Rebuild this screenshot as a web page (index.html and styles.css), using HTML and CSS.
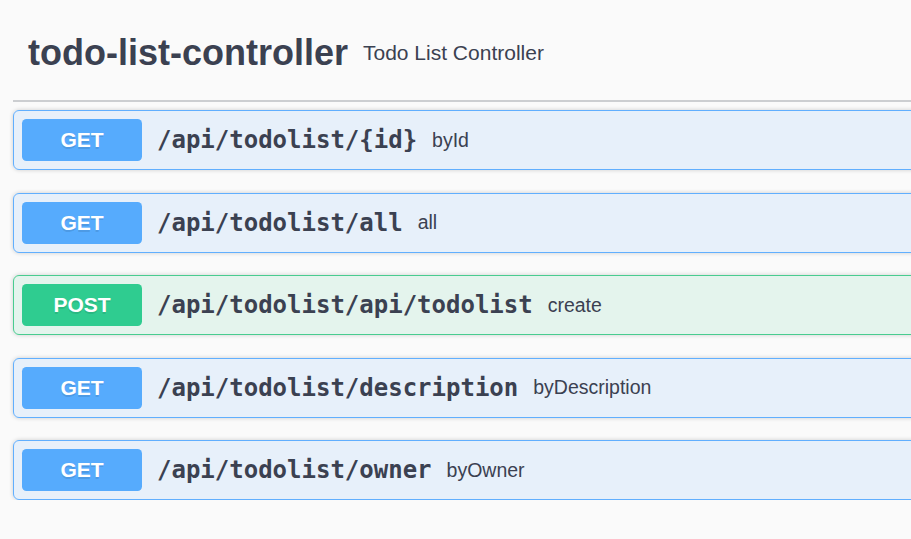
FILE: index.html
```html
<!DOCTYPE html>
<html lang="en">
<head>
<meta charset="utf-8">
<title>todo-list-controller</title>
<link rel="stylesheet" href="styles.css">
</head>
<body>
<div class="wrapper">
  <div class="tag">
    <h3 class="tag-title">todo-list-controller</h3>
    <small class="tag-desc">Todo List Controller</small>
  </div>
  <div class="ops">
    <div class="op op-get">
      <span class="method">GET</span>
      <span class="path">/api/todolist/{id}</span>
      <span class="summary">byId</span>
    </div>
    <div class="op op-get">
      <span class="method">GET</span>
      <span class="path">/api/todolist/all</span>
      <span class="summary">all</span>
    </div>
    <div class="op op-post">
      <span class="method">POST</span>
      <span class="path">/api/todolist/api/todolist</span>
      <span class="summary">create</span>
    </div>
    <div class="op op-get">
      <span class="method">GET</span>
      <span class="path">/api/todolist/description</span>
      <span class="summary">byDescription</span>
    </div>
    <div class="op op-get">
      <span class="method">GET</span>
      <span class="path">/api/todolist/owner</span>
      <span class="summary">byOwner</span>
    </div>
  </div>
</div>
</body>
</html>
```

FILE: styles.css
```css
html, body {
  margin: 0;
  padding: 0;
  background: #fafafa;
  overflow: hidden;
}

body {
  font-family: "Liberation Sans", Arial, sans-serif;
  color: #3b4151;
}

.wrapper {
  width: 1200px;
  padding-left: 13px;
}

.tag {
  display: flex;
  align-items: center;
  box-sizing: border-box;
  height: 102px;
  padding: 6px 30px 0 15px;
  border-bottom: 2px solid rgba(59, 65, 81, 0.24);
  margin-bottom: 8px;
}

.tag-title {
  margin: 0;
  font-size: 36px;
  font-weight: bold;
  line-height: normal;
  color: #3b4151;
}

.tag-desc {
  padding: 0 15px;
  font-size: 21px;
  color: #3b4151;
}

.ops {
  display: flex;
  flex-direction: column;
  gap: 22.5px;
}

.op {
  display: flex;
  align-items: center;
  padding: 8px;
  border: 1px solid #61affe;
  border-radius: 6px;
  background: rgba(97, 175, 254, 0.12);
  box-shadow: 0 0 4.5px rgba(0, 0, 0, 0.19);
}

.op-post {
  border-color: #49cc90;
  background: rgba(73, 204, 144, 0.12);
}

.method {
  display: block;
  min-width: 120px;
  box-sizing: border-box;
  padding: 9px 0;
  line-height: 24px;
  font-size: 21px;
  font-weight: bold;
  text-align: center;
  color: #fff;
  background: #56abfd;
  border-radius: 4.5px;
  text-shadow: 0 1.5px 0 rgba(0, 0, 0, 0.1);
}

.op-post .method {
  background: #2fcc90;
}

.path {
  padding: 0 15px;
  font-family: "DejaVu Sans Mono", monospace;
  font-size: 24px;
  font-weight: bold;
  color: #3b4151;
}

.summary {
  font-size: 19.5px;
  color: #3b4151;
}
```
